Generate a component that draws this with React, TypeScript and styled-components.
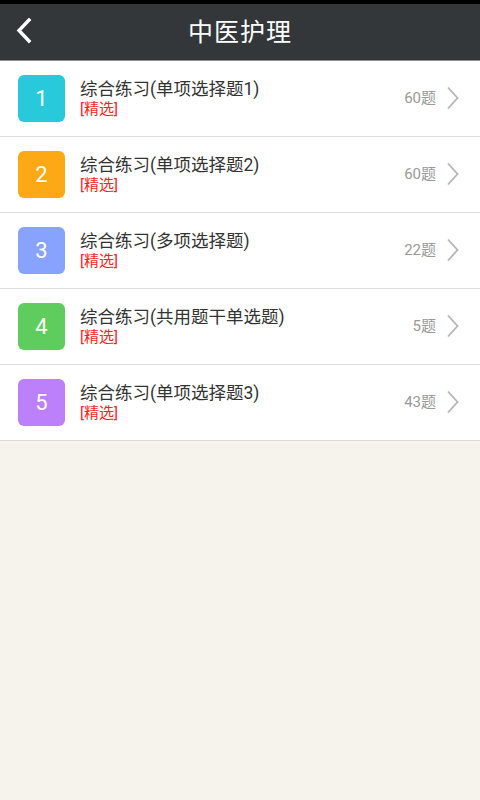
import React from "react";
import styled, { createGlobalStyle } from "styled-components";

const Global = createGlobalStyle`
  html, body {
    margin: 0;
    padding: 0;
    background: #f6f3ec;
    font-family: Roboto, "Noto Sans CJK SC", sans-serif;
  }
`;

const items = [
  { no: 1, title: "综合练习(单项选择题1)", count: "60题", color: "#27c9db" },
  { no: 2, title: "综合练习(单项选择题2)", count: "60题", color: "#fca915" },
  { no: 3, title: "综合练习(多项选择题)", count: "22题", color: "#87a3fd" },
  { no: 4, title: "综合练习(共用题干单选题)", count: "5题", color: "#5fcd5e" },
  { no: 5, title: "综合练习(单项选择题3)", count: "43题", color: "#bb80fa" },
];

const App = () => {
  return (
    <Page>
      <Global />
      <StatusStrip />
      <Header>
        <BackButton>
          <svg width="20" height="26" viewBox="0 0 20 26">
            <path d="M15 2 L5 12.5 L15 23" fill="none" stroke="#fff" strokeWidth="3.4" strokeLinecap="square" />
          </svg>
        </BackButton>
        <h1>中医护理</h1>
      </Header>
      <List>
        {items.map((it) => (
          <Row key={it.no}>
            <Badge color={it.color}>{it.no}</Badge>
            <Info>
              <Title>{it.title}</Title>
              <Tag>[精选]</Tag>
            </Info>
            <Count>{it.count}</Count>
            <svg width="14" height="24" viewBox="0 0 14 24">
              <path d="M2 1.5 L11.5 12 L2 22.5" fill="none" stroke="#b5b5b5" strokeWidth="1.8" />
            </svg>
          </Row>
        ))}
      </List>
    </Page>
  );
};

export default App;

const Page = styled.div`
  width: 480px;
  min-height: 800px;
  background: #f6f3ec;
`;

const StatusStrip = styled.div`
  height: 4px;
  background: #000;
`;

const Header = styled.div`
  position: relative;
  height: 56px;
  background: #33373a;
  border-bottom: 1px solid #8d8f90;
  display: flex;
  align-items: center;
  justify-content: center;

  h1 {
    margin: 0 0 4px;
    color: #fff;
    font-size: 25px;
    font-weight: normal;
    letter-spacing: 1px;
  }
`;

const BackButton = styled.div`
  position: absolute;
  left: 14px;
  top: 14px;
  display: flex;
`;

const List = styled.div`
  background: #fff;
  border-bottom: 1px solid #dcdcdc;
`;

const Row = styled.div`
  display: flex;
  align-items: center;
  padding: 0 20px 0 18px;
  border-bottom: 1px solid #dedede;
  box-sizing: border-box;
  height: 76px;

  &:last-child {
    border-bottom: none;
    height: 75px;
  }

  svg {
    margin-bottom: 2px;
  }
`;

const Badge = styled.div<{ color: string }>`
  width: 47px;
  height: 47px;
  border-radius: 6px;
  background: ${(p) => p.color};
  color: #fff;
  font-size: 22px;
  display: flex;
  align-items: center;
  justify-content: center;
  flex-shrink: 0;
`;

const Info = styled.div`
  flex: 1;
  margin-left: 15px;
  display: flex;
  flex-direction: column;
  padding-bottom: 2px;
`;

const Title = styled.div`
  font-size: 17.5px;
  color: #333;
  line-height: 22px;
`;

const Tag = styled.div`
  font-size: 15px;
  color: #f22;
  line-height: 18px;
`;

const Count = styled.div`
  font-size: 15px;
  color: #999;
  margin-right: 10px;
  margin-bottom: 4px;
`;
